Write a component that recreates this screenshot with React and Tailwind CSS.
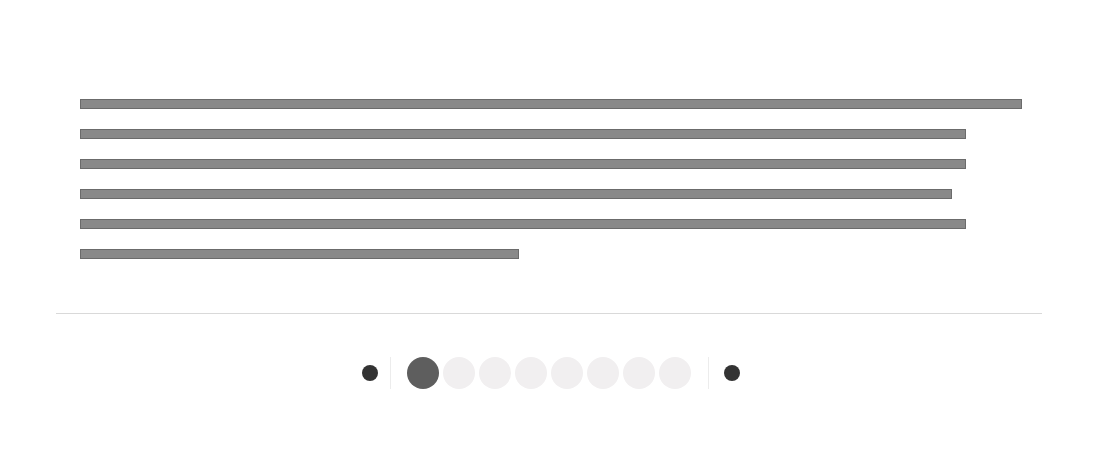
export default function App() {
  const bars = [942, 886, 886, 872, 886, 439];
  return (
    <div className="w-[1098px] h-[474px] bg-white px-[56px] pt-[99px]" style={{ fontFamily: '"Liberation Sans", sans-serif' }}>
      <div className="flex flex-col gap-[20px] pl-[24px]">
        {bars.map((w, i) => (
          <div key={i} className="h-[10px] bg-[#898989] border border-[#6b6b6b]" style={{ width: w }} />
        ))}
      </div>
      <div className="mt-[54px] h-px bg-[#d9d9d9]" />
      <div className="mt-[43px] flex items-center pl-[306px]">
        <div className="w-4 h-4 rounded-full bg-[#333333]" />
        <div className="ml-[12px] w-px h-8 bg-[#ececec]" />
        <div className="ml-[16px] flex gap-1">
          <div className="w-8 h-8 rounded-full bg-[#5e5e5e]" />
          {[0, 1, 2, 3, 4, 5, 6].map((i) => (
            <div key={i} className="w-8 h-8 rounded-full bg-[#f1eff0]" />
          ))}
        </div>
        <div className="ml-[17px] w-px h-8 bg-[#ececec]" />
        <div className="ml-[15px] w-4 h-4 rounded-full bg-[#333333]" />
      </div>
    </div>
  );
}
